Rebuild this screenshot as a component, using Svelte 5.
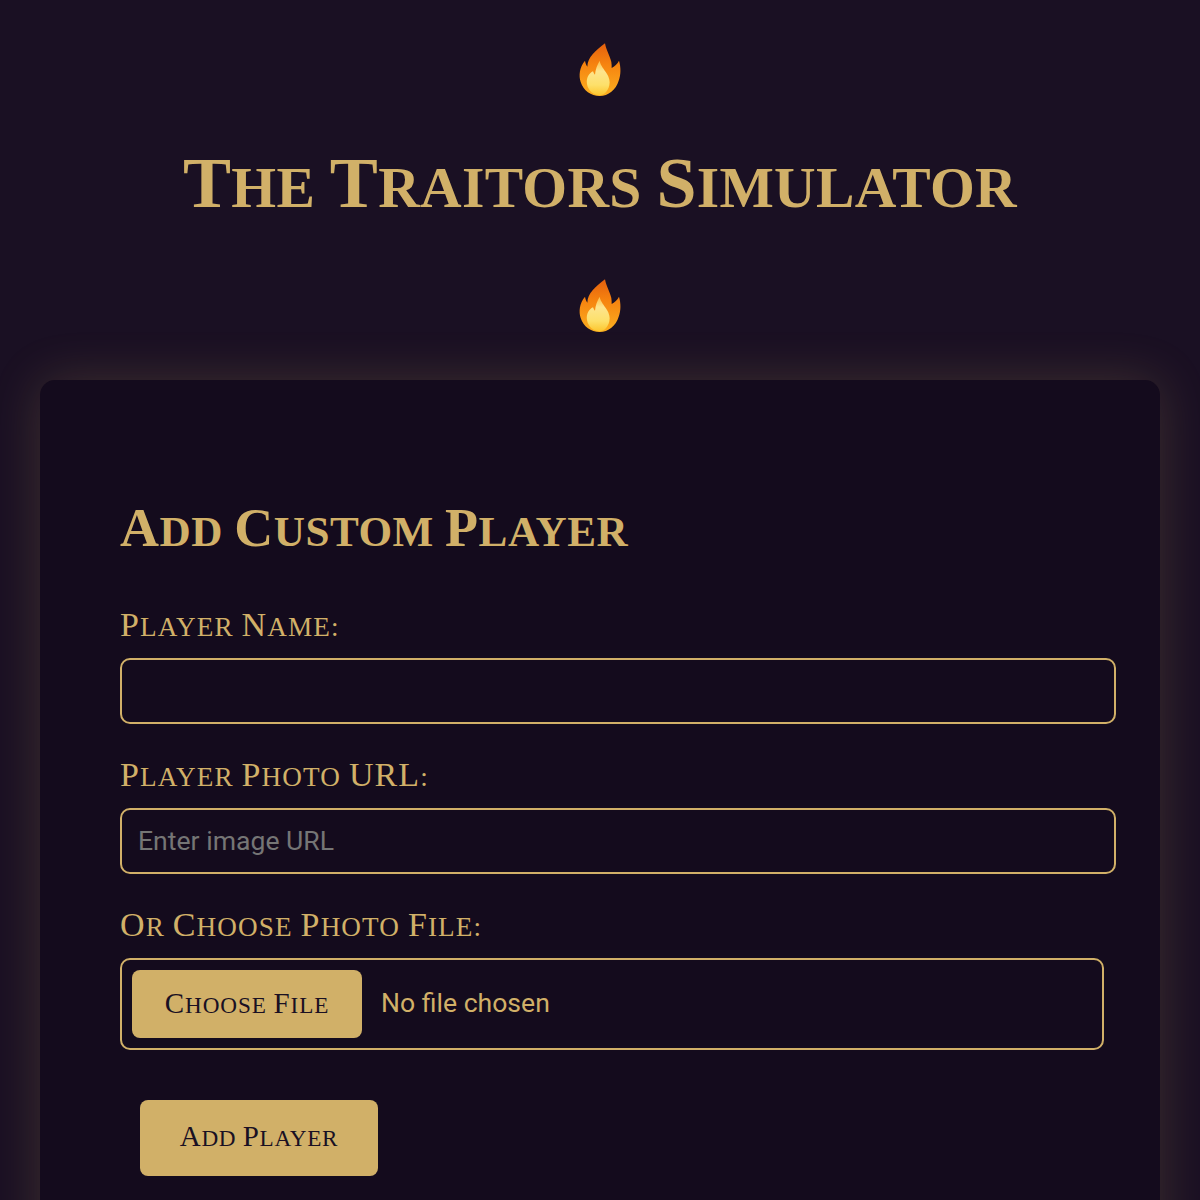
<script>
  let name = $state('');
  let url = $state('');

  // capitals stay full size, the rest renders as smaller capitals
  const parts = (text) => text.match(/[A-Z]+|[^A-Z]+/g);
</script>

{#snippet caps(text)}
  {#each parts(text) as part}<span class:low={!/[A-Z]/.test(part)}>{part}</span>{/each}
{/snippet}

{#snippet flame()}
  <svg class="flame" viewBox="55 36 132 162" role="img" aria-label="🔥">
    <defs>
      <linearGradient id="outer" x1="0" y1="0" x2="0" y2="1">
        <stop offset="0" stop-color="#e4600e" />
        <stop offset="0.4" stop-color="#f6830f" />
        <stop offset="1" stop-color="#fbb021" />
      </linearGradient>
      <linearGradient id="inner" x1="0" y1="0" x2="0" y2="1">
        <stop offset="0" stop-color="#fcbc48" />
        <stop offset="0.3" stop-color="#fde48e" />
        <stop offset="0.7" stop-color="#fde06a" />
        <stop offset="1" stop-color="#fcc62e" />
      </linearGradient>
    </defs>
    <path
      fill="url(#outer)"
      d="M136 40c4 22 14 36 19 56 1 6 1 12 1 18 8-5 18-12 22-22 6 20 6 42-1 60-8 27-31 46-57 46s-49-16-57-42c-6-20-4-44 13-64 1 6 3 12 7 18 1-28 24-48 53-70z"
    />
    <path
      fill="url(#inner)"
      d="M120 92c2 14 14 26 22 40 6 10 10 22 7 34-4 18-16 30-29 30-18 0-35-14-38-34-3-18 6-32 18-38 2 4 3 8 6 10 1-16 7-30 14-42z"
    />
  </svg>
{/snippet}

<div class="page">
  <header class="top">
    {@render flame()}
    <h1>{@render caps('The Traitors Simulator')}</h1>
    {@render flame()}
  </header>

  <main class="card">
    <h2>{@render caps('Add Custom Player')}</h2>
    <label class="field">
      <span class="label">{@render caps('Player Name:')}</span>
      <input type="text" bind:value={name} />
    </label>
    <label class="field">
      <span class="label">{@render caps('Player Photo URL:')}</span>
      <input type="text" placeholder="Enter image URL" bind:value={url} />
    </label>
    <label class="field">
      <span class="label">{@render caps('Or Choose Photo File:')}</span>
      <div class="file">
        <span class="choose">{@render caps('Choose File')}</span>
        <span class="none">No file chosen</span>
      </div>
    </label>
    <button class="add">{@render caps('Add Player')}</button>
  </main>
</div>

<style>
  :global(body) {
    background: #1a1023;
    font-family: Roboto, sans-serif;
    color: #d1b068;
  }

  .page {
    height: 1200px;
    overflow: hidden;
  }

  .low {
    font-size: 0.8em;
    line-height: 0;
    text-transform: uppercase;
  }

  .top {
    display: flex;
    flex-direction: column;
    align-items: center;
    padding-top: 42px;
  }

  .flame {
    display: block;
    width: 44px;
    height: 54px;
  }

  h1 {
    margin: 49px 0 57px;
    font-family: "Liberation Serif", serif;
    font-weight: 700;
    font-size: 72px;
    letter-spacing: 0.3px;
    line-height: 76px;
    color: #d1b068;
  }

  .card {
    margin: 48px 40px 0;
    padding: 120px 44px 120px 80px;
    background: #140b1d;
    border-radius: 15px;
    box-shadow: 0 0 50px rgba(212, 175, 99, 0.2);
  }

  h2 {
    margin: 0 0 50px;
    font-family: "Liberation Serif", serif;
    font-size: 54px;
    letter-spacing: 0.5px;
    line-height: 56px;
    color: #d1b068;
  }

  .field {
    display: block;
    margin-bottom: 32px;
    font-family: "Liberation Serif", serif;
    font-size: 34px;
    line-height: 38px;
  }

  .label {
    display: block;
    margin-bottom: 14px;
    letter-spacing: 1.1px;
  }

  input {
    display: block;
    box-sizing: border-box;
    width: 100%;
    height: 66px;
    padding: 0 16px 2px;
    background: #140b1d;
    border: 2px solid #d1b068;
    border-radius: 10px;
    color: #d1b068;
    font-family: Roboto, sans-serif;
    font-size: 26.6px;
    outline: none;
  }

  .file {
    display: flex;
    align-items: center;
    box-sizing: border-box;
    width: 984px;
    height: 92px;
    padding: 0 10px;
    border: 2px solid #d1b068;
    border-radius: 10px;
  }

  .choose {
    box-sizing: border-box;
    width: 230px;
    padding: 14px 0 16px;
    text-align: center;
    background: #d1b068;
    color: #1a1023;
    border-radius: 8px;
    font-size: 29px;
    letter-spacing: 0.9px;
    line-height: 38px;
  }

  .none {
    margin: 0 0 2px 19px;
    font-family: Roboto, sans-serif;
    font-size: 26.6px;
  }

  .add {
    display: block;
    margin: 50px 0 0 20px;
    width: 238px;
    height: 76px;
    padding: 0 0 3px;
    border: 0;
    border-radius: 8px;
    background: #d1b068;
    color: #1a1023;
    font-family: "Liberation Serif", serif;
    font-size: 29px;
    letter-spacing: 0.7px;
  }
</style>
